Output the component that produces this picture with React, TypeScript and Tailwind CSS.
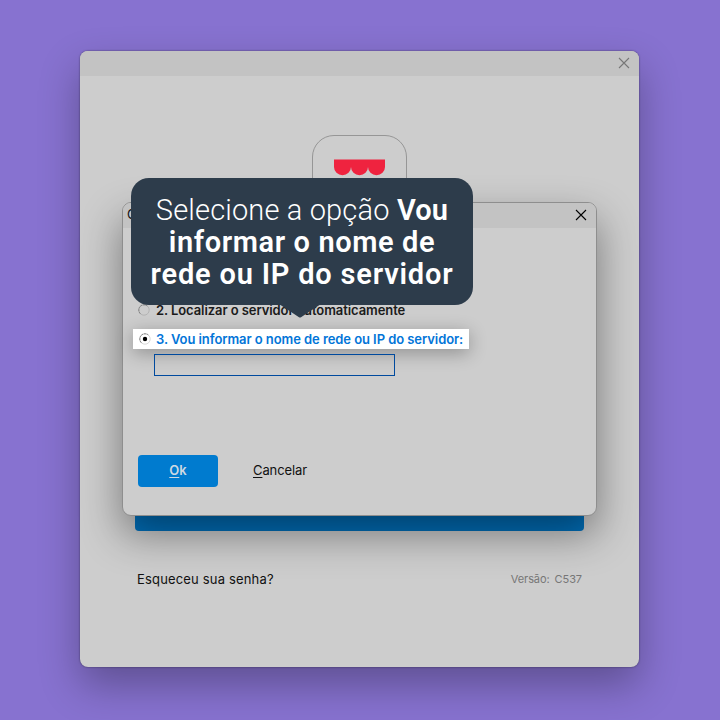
function CloseIcon({ className }: { className: string }) {
  return (
    <svg viewBox="0 0 12 12" fill="none" className={`w-3 h-3 ${className}`}>
      <path d="M1 1L11 11M11 1L1 11" stroke="currentColor" strokeWidth="1.1" />
    </svg>
  );
}

function Logo() {
  return (
    <div className="w-[95px] h-[95px] rounded-[22px] border border-[#969696]">
      <svg viewBox="0 0 93 93" className="w-full h-full">
        <path d="M21 23.5H72V31A8.5 8.2 0 0 1 55 31A8.5 8.2 0 0 1 38 31A8.5 8.2 0 0 1 21 31Z" fill="#ef233f" />
      </svg>
    </div>
  );
}

function Radio({ checked = false }: { checked?: boolean }) {
  return (
    <svg viewBox="0 0 12 12" className="w-3 h-3 shrink-0" fill="none">
      <circle cx="6" cy="6" r="5.2" stroke={checked ? "#d8d8d8" : "#b4b4b4"} />
      <path d="M2.3 9.7A5.2 5.2 0 0 1 9.7 2.3" stroke="#7d7d7d" strokeDasharray="2 0.7" />
      {checked && <circle cx="6" cy="6" r="2.2" fill="#000" />}
    </svg>
  );
}

function ServerDialog() {
  return (
    <div className="absolute left-[122px] top-[202px] w-[475px] h-[314px] rounded-[9px] border border-[#8e8e8e] bg-[#cdcdcd] shadow-[0_18px_40px_rgba(0,0,0,0.42)]">
      <div className="flex h-[25px] items-center justify-between rounded-t-lg bg-[#c3c3c3] pl-1 pr-[9px] pb-px">
        <span className="text-[13px] text-[#111]">C</span>
        <CloseIcon className="text-black" />
      </div>

      <div className="flex flex-col pt-[72px]">
        <div className="flex h-5 items-center gap-[6px] pl-[15px]">
          <Radio />
          <span className="pt-0.5 whitespace-nowrap text-[13px] font-semibold tracking-[-0.08px] text-[#1b1b1b]">2. Localizar o servidor automaticamente</span>
        </div>

        {/* opção em destaque */}
        <div className="mt-[9px] ml-[10px] flex h-5 w-[336px] items-center gap-[5px] bg-white pl-[6px] shadow-[0_4px_18px_rgba(0,0,0,0.3)]">
          <Radio checked />
          <span className="pt-0.5 whitespace-nowrap text-[13px] font-semibold tracking-[-0.07px] text-[#0275d8]">3. Vou informar o nome de rede ou IP do servidor:</span>
        </div>

        <input className="relative mt-[5px] ml-[31px] h-[22px] w-[241px] border border-[#004a9e] bg-transparent" />
      </div>

      <div className="mt-[79px] flex h-8 items-center pl-[15px] text-[13px]">
        <button className="h-8 w-20 rounded bg-[#007bcf] font-semibold text-[#cdd9e2]">
          <span className="underline underline-offset-2">O</span>k
        </button>
        <button className="ml-[35px] tracking-[-0.1px] text-[#111]">
          <span className="underline underline-offset-2">C</span>ancelar
        </button>
      </div>
    </div>
  );
}

function Callout() {
  return (
    <div className="absolute left-[131px] top-[178px] h-[127px] w-[342px] rounded-[18px] bg-[#2d3c4b] pt-4 text-center font-['Roboto',sans-serif] text-[29px] leading-8 font-[600] whitespace-nowrap text-white">
      <p className="tracking-[0.15px]">
        <span className="font-[350]">Selecione a opção</span> Vou
      </p>
      <p className="tracking-[0.6px]">informar o nome de</p>
      <p className="tracking-[0.8px]">rede ou IP do servidor</p>
      <svg viewBox="0 0 42 14" className="absolute left-[148px] top-[126px] h-[14px] w-[42px]">
        <path d="M0 0H42L22 13.2Q21 14 20 13.2Z" fill="#2d3c4b" />
      </svg>
    </div>
  );
}

export default function App() {
  return (
    <div className="relative h-[720px] w-[720px] overflow-hidden bg-[#8772d0] px-20 pt-[51px] font-['Inter',sans-serif]">
      <div className="flex h-[616px] w-[559px] flex-col overflow-hidden rounded-lg bg-[#cdcdcd] shadow-[0_0_2px_rgba(0,0,0,0.5),0_18px_40px_rgba(0,0,0,0.3)]">
        <div className="flex h-[25px] shrink-0 items-center justify-end bg-[#c3c3c3] pr-[9px] pb-px">
          <CloseIcon className="text-[#777]" />
        </div>
        <div className="flex justify-center pt-[59px]">
          <Logo />
        </div>
        <div className="mt-[264px] ml-[55px] h-[37px] w-[449px] rounded bg-[#0071bd]" />
        <div className="mt-[38px] flex h-5 items-center justify-between pl-[57px] pr-[57px]">
          <span className="pt-0.5 text-[13px] tracking-[0.17px] text-[#111]">Esqueceu sua senha?</span>
          <span className="text-[11px] tracking-[-0.08px] text-[#777] [word-spacing:2px]">Versão: C537</span>
        </div>
      </div>

      <ServerDialog />
      <Callout />
    </div>
  );
}
